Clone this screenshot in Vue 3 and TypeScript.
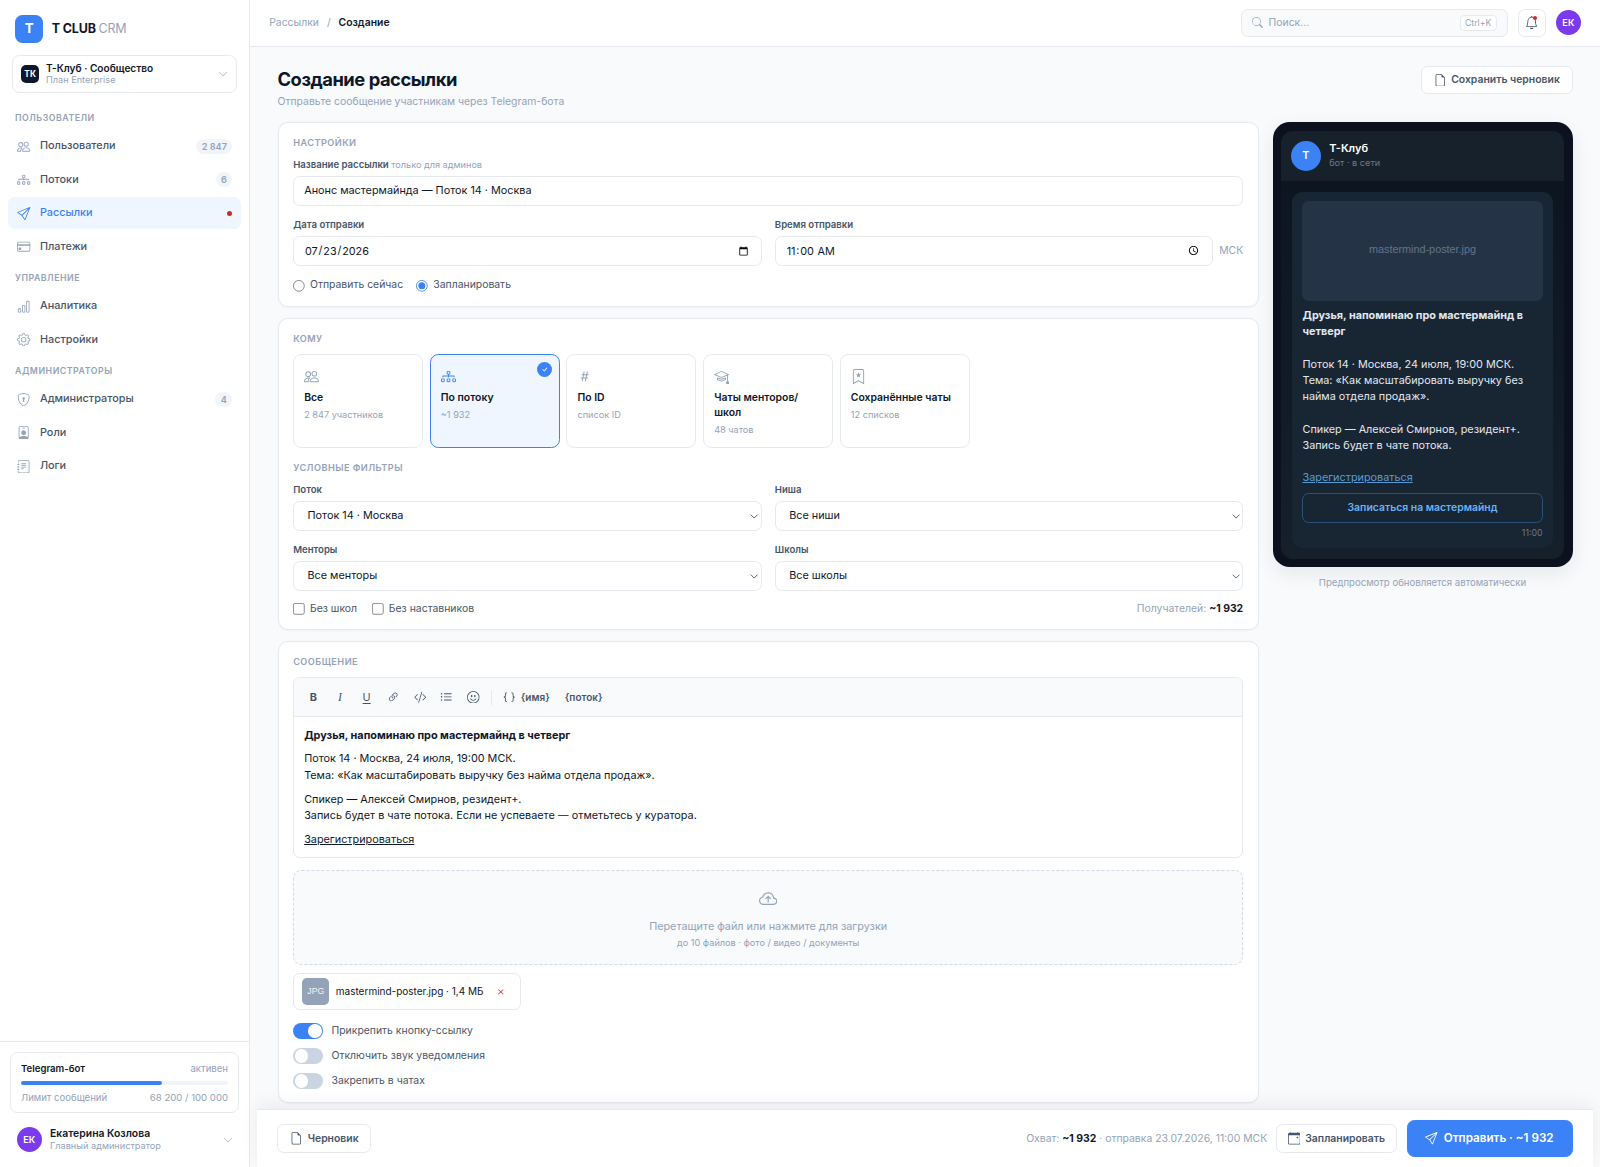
<script setup lang="ts">
import { ref } from 'vue'

type IconName = keyof typeof icons

interface NavItem {
  label: string
  icon: IconName
  badge?: string
  active?: boolean
}

interface NavGroup {
  title: string
  items: NavItem[]
}

interface Target {
  title: string
  note: string
  icon: IconName
  active?: boolean
}

const icons = {
  people: [
    'M15 14s1 0 1-1-1-4-5-4-5 3-5 4 1 1 1 1zm-7.978-1L7 12.996c.001-.264.167-1.03.76-1.72C8.312 10.629 9.282 10 11 10c1.717 0 2.687.63 3.24 1.276.593.69.758 1.457.76 1.72l-.008.002-.014.002zM11 7a2 2 0 1 0 0-4 2 2 0 0 0 0 4m3-2a3 3 0 1 1-6 0 3 3 0 0 1 6 0M6.936 9.28a6 6 0 0 0-1.23-.247A7 7 0 0 0 5 9c-4 0-5 3-5 4q0 1 1 1h4.216A2.24 2.24 0 0 1 5 13c0-1.01.377-2.042 1.09-2.904.243-.294.526-.569.846-.816M4.92 10A5.5 5.5 0 0 0 4 13H1c0-.26.164-1.03.76-1.724.545-.636 1.492-1.256 3.16-1.275ZM1.5 5.5a3 3 0 1 1 6 0 3 3 0 0 1-6 0m3-2a2 2 0 1 0 0 4 2 2 0 0 0 0-4',
  ],
  diagram: [
    'M6 3.5A1.5 1.5 0 0 1 7.5 2h1A1.5 1.5 0 0 1 10 3.5v1A1.5 1.5 0 0 1 8.5 6v1H14a.5.5 0 0 1 .5.5v1a.5.5 0 0 1-1 0V8h-5v.5a.5.5 0 0 1-1 0V8h-5v.5a.5.5 0 0 1-1 0v-1A.5.5 0 0 1 2 7h5.5V6A1.5 1.5 0 0 1 6 4.5zM8.5 5a.5.5 0 0 0 .5-.5v-1a.5.5 0 0 0-.5-.5h-1a.5.5 0 0 0-.5.5v1a.5.5 0 0 0 .5.5zM0 11.5A1.5 1.5 0 0 1 1.5 10h1A1.5 1.5 0 0 1 4 11.5v1A1.5 1.5 0 0 1 2.5 14h-1A1.5 1.5 0 0 1 0 12.5zm1.5-.5a.5.5 0 0 0-.5.5v1a.5.5 0 0 0 .5.5h1a.5.5 0 0 0 .5-.5v-1a.5.5 0 0 0-.5-.5zm4.5.5A1.5 1.5 0 0 1 7.5 10h1a1.5 1.5 0 0 1 1.5 1.5v1A1.5 1.5 0 0 1 8.5 14h-1A1.5 1.5 0 0 1 6 12.5zm1.5-.5a.5.5 0 0 0-.5.5v1a.5.5 0 0 0 .5.5h1a.5.5 0 0 0 .5-.5v-1a.5.5 0 0 0-.5-.5zm4.5.5a1.5 1.5 0 0 1 1.5-1.5h1a1.5 1.5 0 0 1 1.5 1.5v1a1.5 1.5 0 0 1-1.5 1.5h-1a1.5 1.5 0 0 1-1.5-1.5zm1.5-.5a.5.5 0 0 0-.5.5v1a.5.5 0 0 0 .5.5h1a.5.5 0 0 0 .5-.5v-1a.5.5 0 0 0-.5-.5z',
  ],
  send: [
    'M15.854.146a.5.5 0 0 1 .11.54l-5.819 14.547a.75.75 0 0 1-1.329.124l-3.178-4.995L.643 7.184a.75.75 0 0 1 .124-1.33L15.314.037a.5.5 0 0 1 .54.11ZM6.636 10.07l2.761 4.338L14.13 2.576zm6.787-8.201L1.591 6.602l4.339 2.76z',
  ],
  card: [
    'M0 4a2 2 0 0 1 2-2h12a2 2 0 0 1 2 2v8a2 2 0 0 1-2 2H2a2 2 0 0 1-2-2zm2-1a1 1 0 0 0-1 1v1h14V4a1 1 0 0 0-1-1zm13 4H1v5a1 1 0 0 0 1 1h12a1 1 0 0 0 1-1z',
    'M2 10a1 1 0 0 1 1-1h1a1 1 0 0 1 1 1v1a1 1 0 0 1-1 1H3a1 1 0 0 1-1-1z',
  ],
  chart: [
    'M4 11H2v3h2zm5-4H7v7h2zm5-5v12h-2V2zm-2-1a1 1 0 0 0-1 1v12a1 1 0 0 0 1 1h2a1 1 0 0 0 1-1V2a1 1 0 0 0-1-1zM6 7a1 1 0 0 1 1-1h2a1 1 0 0 1 1 1v7a1 1 0 0 1-1 1H7a1 1 0 0 1-1-1zm-5 4a1 1 0 0 1 1-1h2a1 1 0 0 1 1 1v3a1 1 0 0 1-1 1H2a1 1 0 0 1-1-1z',
  ],
  gear: [
    'M8 4.754a3.246 3.246 0 1 0 0 6.492 3.246 3.246 0 0 0 0-6.492M5.754 8a2.246 2.246 0 1 1 4.492 0 2.246 2.246 0 0 1-4.492 0',
    'M9.796 1.343c-.527-1.79-3.065-1.79-3.592 0l-.094.319a.873.873 0 0 1-1.255.52l-.292-.16c-1.64-.892-3.433.902-2.54 2.541l.159.292a.873.873 0 0 1-.52 1.255l-.319.094c-1.79.527-1.79 3.065 0 3.592l.319.094a.873.873 0 0 1 .52 1.255l-.16.292c-.892 1.64.901 3.434 2.541 2.54l.292-.159a.873.873 0 0 1 1.255.52l.094.319c.527 1.79 3.065 1.79 3.592 0l.094-.319a.873.873 0 0 1 1.255-.52l.292.16c1.64.893 3.434-.902 2.54-2.541l-.159-.292a.873.873 0 0 1 .52-1.255l.319-.094c1.79-.527 1.79-3.065 0-3.592l-.319-.094a.873.873 0 0 1-.52-1.255l.16-.292c.893-1.64-.902-3.433-2.541-2.54l-.292.159a.873.873 0 0 1-1.255-.52zm-2.633.283c.246-.835 1.428-.835 1.674 0l.094.319a1.873 1.873 0 0 0 2.693 1.115l.291-.16c.764-.415 1.6.42 1.184 1.185l-.159.292a1.873 1.873 0 0 0 1.116 2.692l.318.094c.835.246.835 1.428 0 1.674l-.319.094a1.873 1.873 0 0 0-1.115 2.693l.16.291c.415.764-.42 1.6-1.185 1.184l-.291-.159a1.873 1.873 0 0 0-2.693 1.116l-.094.318c-.246.835-1.428.835-1.674 0l-.094-.319a1.873 1.873 0 0 0-2.692-1.115l-.292.16c-.764.415-1.6-.42-1.184-1.185l.159-.291A1.873 1.873 0 0 0 1.945 8.93l-.319-.094c-.835-.246-.835-1.428 0-1.674l.319-.094A1.873 1.873 0 0 0 3.06 4.377l-.16-.292c-.415-.764.42-1.6 1.185-1.184l.292.159a1.873 1.873 0 0 0 2.692-1.115z',
  ],
  shield: [
    'M5.338 1.59a61 61 0 0 0-2.837.856.48.48 0 0 0-.328.39c-.554 4.157.726 7.19 2.253 9.188a10.7 10.7 0 0 0 2.287 2.233c.346.244.652.42.893.533q.18.085.293.118a1 1 0 0 0 .101.025 1 1 0 0 0 .1-.025q.114-.034.294-.118c.24-.113.547-.29.893-.533a10.7 10.7 0 0 0 2.287-2.233c1.527-1.997 2.807-5.031 2.253-9.188a.48.48 0 0 0-.328-.39c-.651-.213-1.75-.56-2.837-.855C9.552 1.29 8.531 1.067 8 1.067c-.53 0-1.552.223-2.662.524zM5.072.56C6.157.265 7.31 0 8 0s1.843.265 2.928.56c1.11.3 2.229.655 2.887.87a1.54 1.54 0 0 1 1.044 1.262c.596 4.477-.787 7.795-2.465 9.99a11.8 11.8 0 0 1-2.517 2.453 7 7 0 0 1-1.048.625c-.28.132-.581.24-.829.24s-.548-.108-.829-.24a7 7 0 0 1-1.048-.625 11.8 11.8 0 0 1-2.517-2.453C1.928 10.487.545 7.169 1.141 2.692A1.54 1.54 0 0 1 2.185 1.43 63 63 0 0 1 5.072.56',
    'M9.5 6.5a1.5 1.5 0 0 1-1 1.415l.385 1.99a.5.5 0 0 1-.491.595h-.788a.5.5 0 0 1-.49-.595l.384-1.99a1.5 1.5 0 1 1 2-1.415',
  ],
  badge: [
    'M6.5 2a.5.5 0 0 0 0 1h3a.5.5 0 0 0 0-1zM11 8a3 3 0 1 1-6 0 3 3 0 0 1 6 0',
    'M4.5 0A2.5 2.5 0 0 0 2 2.5V14a2 2 0 0 0 2 2h8a2 2 0 0 0 2-2V2.5A2.5 2.5 0 0 0 11.5 0zM3 2.5A1.5 1.5 0 0 1 4.5 1h7A1.5 1.5 0 0 1 13 2.5v10.795a4.2 4.2 0 0 0-.776-.492C11.392 12.387 10.063 12 8 12s-3.392.387-4.224.803a4.2 4.2 0 0 0-.776.492z',
  ],
  journal: [
    'M5 10.5a.5.5 0 0 1 .5-.5h2a.5.5 0 0 1 0 1h-2a.5.5 0 0 1-.5-.5m0-2a.5.5 0 0 1 .5-.5h5a.5.5 0 0 1 0 1h-5a.5.5 0 0 1-.5-.5m0-2a.5.5 0 0 1 .5-.5h5a.5.5 0 0 1 0 1h-5a.5.5 0 0 1-.5-.5m0-2a.5.5 0 0 1 .5-.5h5a.5.5 0 0 1 0 1h-5a.5.5 0 0 1-.5-.5',
    'M3 0h10a2 2 0 0 1 2 2v12a2 2 0 0 1-2 2H3a2 2 0 0 1-2-2v-1h1v1a1 1 0 0 0 1 1h10a1 1 0 0 0 1-1V2a1 1 0 0 0-1-1H3a1 1 0 0 0-1 1v1H1V2a2 2 0 0 1 2-2',
    'M1 5v-.5a.5.5 0 0 1 1 0V5h.5a.5.5 0 0 1 0 1h-2a.5.5 0 0 1 0-1zm0 3v-.5a.5.5 0 0 1 1 0V8h.5a.5.5 0 0 1 0 1h-2a.5.5 0 0 1 0-1zm0 3v-.5a.5.5 0 0 1 1 0v.5h.5a.5.5 0 0 1 0 1h-2a.5.5 0 0 1 0-1z',
  ],
  file: [
    'M14 4.5V14a2 2 0 0 1-2 2H4a2 2 0 0 1-2-2V2a2 2 0 0 1 2-2h5.5zm-3 0A1.5 1.5 0 0 1 9.5 3V1H4a1 1 0 0 0-1 1v12a1 1 0 0 0 1 1h8a1 1 0 0 0 1-1V4.5z',
  ],
  search: [
    'M11.742 10.344a6.5 6.5 0 1 0-1.397 1.398h-.001q.044.06.098.115l3.85 3.85a1 1 0 0 0 1.415-1.414l-3.85-3.85a1 1 0 0 0-.115-.1zM12 6.5a5.5 5.5 0 1 1-11 0 5.5 5.5 0 0 1 11 0',
  ],
  bell: [
    'M8 16a2 2 0 0 0 2-2H6a2 2 0 0 0 2 2M8 1.918l-.797.161A4 4 0 0 0 4 6c0 .628-.134 2.197-.459 3.742-.16.767-.376 1.566-.663 2.258h10.244c-.287-.692-.502-1.49-.663-2.258C12.134 8.197 12 6.628 12 6a4 4 0 0 0-3.203-3.92zM14.22 12c.223.447.481.801.78 1H1c.299-.199.557-.553.78-1C2.68 10.2 3 6.88 3 6c0-2.42 1.72-4.44 4.005-4.901a1 1 0 1 1 1.99 0A5 5 0 0 1 13 6c0 .88.32 4.2 1.22 6',
  ],
  chevron: [
    'M1.646 4.646a.5.5 0 0 1 .708 0L8 10.293l5.646-5.647a.5.5 0 0 1 .708.708l-6 6a.5.5 0 0 1-.708 0l-6-6a.5.5 0 0 1 0-.708',
  ],
  hash: [
    'M8.39 12.648a1 1 0 0 0-.015.18c0 .305.21.508.5.508.266 0 .492-.172.555-.477l.554-2.703h1.204c.421 0 .617-.234.617-.547 0-.312-.188-.53-.617-.53h-.985l.516-2.524h1.265c.43 0 .618-.227.618-.547 0-.313-.188-.524-.618-.524h-1.046l.476-2.304a1 1 0 0 0 .016-.164.51.51 0 0 0-.516-.516.54.54 0 0 0-.539.43l-.523 2.554H7.617l.477-2.304c.008-.04.015-.118.015-.164a.51.51 0 0 0-.523-.516.54.54 0 0 0-.531.43L6.53 5.484H5.414c-.43 0-.617.22-.617.532s.187.539.617.539h.906l-.515 2.523H4.609c-.421 0-.609.219-.609.531s.188.547.61.547h.976l-.516 2.492c-.008.04-.015.125-.015.18 0 .305.21.508.5.508.265 0 .492-.172.554-.477l.555-2.703h2.242zm-1-6.109h2.266l-.515 2.563H6.859l.532-2.563z',
  ],
  mortarboard: [
    'M8.211 2.047a.5.5 0 0 0-.422 0l-7.5 3.5a.5.5 0 0 0 .025.917l7.5 3a.5.5 0 0 0 .372 0L14 7.14V13a1 1 0 0 0-1 1v2h3v-2a1 1 0 0 0-1-1V6.739l.686-.275a.5.5 0 0 0 .025-.917zM8 8.46 1.758 5.965 8 3.052l6.242 2.913z',
    'M4.176 9.032a.5.5 0 0 0-.656.327l-.5 1.7a.5.5 0 0 0 .294.605l4.5 1.8a.5.5 0 0 0 .372 0l4.5-1.8a.5.5 0 0 0 .294-.605l-.5-1.7a.5.5 0 0 0-.656-.327L8 10.466zm-.068 1.873.22-.748 3.496 1.311a.5.5 0 0 0 .352 0l3.496-1.311.22.748L8 12.46z',
  ],
  bookmark: [
    'M7.84 4.1a.178.178 0 0 1 .32 0l.634 1.285a.18.18 0 0 0 .134.098l1.42.206c.145.021.204.2.098.303L9.42 6.993a.18.18 0 0 0-.051.158l.242 1.414a.178.178 0 0 1-.258.187l-1.27-.668a.18.18 0 0 0-.165 0l-1.27.668a.178.178 0 0 1-.257-.187l.242-1.414a.18.18 0 0 0-.05-.158l-1.03-1.001a.178.178 0 0 1 .098-.303l1.42-.206a.18.18 0 0 0 .134-.098z',
    'M2 2a2 2 0 0 1 2-2h8a2 2 0 0 1 2 2v13.5a.5.5 0 0 1-.777.416L8 13.101l-5.223 2.815A.5.5 0 0 1 2 15.5zm2-1a1 1 0 0 0-1 1v12.566l4.723-2.482a.5.5 0 0 1 .554 0L13 14.566V2a1 1 0 0 0-1-1z',
  ],
  link: [
    'M4.715 6.542 3.343 7.914a3 3 0 1 0 4.243 4.243l1.828-1.829A3 3 0 0 0 8.586 5.5L8 6.086a1 1 0 0 0-.154.199 2 2 0 0 1 .861 3.337L6.88 11.45a2 2 0 1 1-2.83-2.83l.793-.792a4 4 0 0 1-.128-1.287z',
    'M6.586 4.672A3 3 0 0 0 7.414 9.5l.775-.776a2 2 0 0 1-.896-3.346L9.12 3.55a2 2 0 1 1 2.83 2.83l-.793.792c.112.42.155.855.128 1.287l1.372-1.372a3 3 0 1 0-4.243-4.243z',
  ],
  code: [
    'M10.478 1.647a.5.5 0 1 0-.956-.294l-4 13a.5.5 0 0 0 .956.294zM4.854 4.146a.5.5 0 0 1 0 .708L1.707 8l3.147 3.146a.5.5 0 0 1-.708.708l-3.5-3.5a.5.5 0 0 1 0-.708l3.5-3.5a.5.5 0 0 1 .708 0m6.292 0a.5.5 0 0 0 0 .708L14.293 8l-3.147 3.146a.5.5 0 0 0 .708.708l3.5-3.5a.5.5 0 0 0 0-.708l-3.5-3.5a.5.5 0 0 0-.708 0',
  ],
  list: [
    'M5 11.5a.5.5 0 0 1 .5-.5h9a.5.5 0 0 1 0 1h-9a.5.5 0 0 1-.5-.5m0-4a.5.5 0 0 1 .5-.5h9a.5.5 0 0 1 0 1h-9a.5.5 0 0 1-.5-.5m0-4a.5.5 0 0 1 .5-.5h9a.5.5 0 0 1 0 1h-9a.5.5 0 0 1-.5-.5m-3 1a1 1 0 1 0 0-2 1 1 0 0 0 0 2m0 4a1 1 0 1 0 0-2 1 1 0 0 0 0 2m0 4a1 1 0 1 0 0-2 1 1 0 0 0 0 2',
  ],
  smile: [
    'M8 15A7 7 0 1 1 8 1a7 7 0 0 1 0 14m0 1A8 8 0 1 0 8 0a8 8 0 0 0 0 16',
    'M4.285 9.567a.5.5 0 0 1 .683.183A3.5 3.5 0 0 0 8 11.5a3.5 3.5 0 0 0 3.032-1.75.5.5 0 1 1 .866.5A4.5 4.5 0 0 1 8 12.5a4.5 4.5 0 0 1-3.898-2.25.5.5 0 0 1 .183-.683M7 6.5C7 7.328 6.552 8 6 8s-1-.672-1-1.5S5.448 5 6 5s1 .672 1 1.5m4 0c0 .828-.448 1.5-1 1.5s-1-.672-1-1.5S9.448 5 10 5s1 .672 1 1.5',
  ],
  braces: [
    'M2.114 8.063V7.9c1.005-.102 1.497-.615 1.497-1.6V4.503c0-1.094.39-1.538 1.354-1.538h.273V2h-.376C3.25 2 2.49 2.759 2.49 4.352v1.524c0 1.094-.376 1.456-1.49 1.456v1.299c1.114 0 1.49.362 1.49 1.456v1.524c0 1.593.759 2.352 2.372 2.352h.376v-.964h-.273c-.964 0-1.354-.444-1.354-1.538V9.663c0-.984-.492-1.497-1.497-1.6M13.886 7.9v.163c-1.005.103-1.497.616-1.497 1.6v1.798c0 1.094-.39 1.538-1.354 1.538h-.273v.964h.376c1.613 0 2.372-.759 2.372-2.352v-1.524c0-1.094.376-1.456 1.49-1.456V7.332c-1.114 0-1.49-.362-1.49-1.456V4.352C13.51 2.759 12.75 2 11.138 2h-.376v.964h.273c.964 0 1.354.444 1.354 1.538V6.3c0 .984.492 1.497 1.497 1.6',
  ],
  cloud: [
    'M7.646 5.146a.5.5 0 0 1 .708 0l2 2a.5.5 0 0 1-.708.708L8.5 6.707V10.5a.5.5 0 0 1-1 0V6.707L6.354 7.854a.5.5 0 1 1-.708-.708z',
    'M4.406 3.342A5.53 5.53 0 0 1 8 2c2.69 0 4.923 2 5.166 4.579C14.758 6.804 16 8.137 16 9.773 16 11.569 14.502 13 12.687 13H3.781C1.708 13 0 11.366 0 9.318c0-1.763 1.266-3.223 2.942-3.593.143-.863.698-1.723 1.464-2.383m.653.757c-.757.653-1.153 1.44-1.153 2.056v.448l-.445.049C2.064 6.805 1 7.952 1 9.318 1 10.785 2.23 12 3.781 12h8.906C13.98 12 15 10.988 15 9.773c0-1.216-1.02-2.228-2.313-2.228h-.5v-.5C12.188 4.825 10.328 3 8 3a4.53 4.53 0 0 0-2.941 1.1z',
  ],
  close: [
    'M4.646 4.646a.5.5 0 0 1 .708 0L8 7.293l2.646-2.647a.5.5 0 0 1 .708.708L8.707 8l2.647 2.646a.5.5 0 0 1-.708.708L8 8.707l-2.646 2.647a.5.5 0 0 1-.708-.708L7.293 8 4.646 5.354a.5.5 0 0 1 0-.708',
  ],
  check: [
    'M10.97 4.97a.75.75 0 0 1 1.07 1.05l-3.99 4.99a.75.75 0 0 1-1.08.02L4.324 8.384a.75.75 0 1 1 1.06-1.06l2.094 2.093 3.473-4.425z',
  ],
  calendar: [
    'M11 6.5a.5.5 0 0 1 .5-.5h1a.5.5 0 0 1 .5.5v1a.5.5 0 0 1-.5.5h-1a.5.5 0 0 1-.5-.5z',
    'M3.5 0a.5.5 0 0 1 .5.5V1h8V.5a.5.5 0 0 1 1 0V1h1a2 2 0 0 1 2 2v11a2 2 0 0 1-2 2H2a2 2 0 0 1-2-2V3a2 2 0 0 1 2-2h1V.5a.5.5 0 0 1 .5-.5M1 4v10a1 1 0 0 0 1 1h12a1 1 0 0 0 1-1V4z',
  ],
}

const navGroups: NavGroup[] = [
  {
    title: 'Пользователи',
    items: [
      { label: 'Пользователи', icon: 'people', badge: '2 847' },
      { label: 'Потоки', icon: 'diagram', badge: '6' },
      { label: 'Рассылки', icon: 'send', active: true },
      { label: 'Платежи', icon: 'card' },
    ],
  },
  {
    title: 'Управление',
    items: [
      { label: 'Аналитика', icon: 'chart' },
      { label: 'Настройки', icon: 'gear' },
    ],
  },
  {
    title: 'Администраторы',
    items: [
      { label: 'Администраторы', icon: 'shield', badge: '4' },
      { label: 'Роли', icon: 'badge' },
      { label: 'Логи', icon: 'journal' },
    ],
  },
]

const targets: Target[] = [
  { title: 'Все', note: '2 847 участников', icon: 'people' },
  { title: 'По потоку', note: '~1 932', icon: 'diagram', active: true },
  { title: 'По ID', note: 'список ID', icon: 'hash' },
  { title: 'Чаты менторов/школ', note: '48 чатов', icon: 'mortarboard' },
  { title: 'Сохранённые чаты', note: '12 списков', icon: 'bookmark' },
]

const filters = [
  { label: 'Поток', value: 'Поток 14 · Москва' },
  { label: 'Ниша', value: 'Все ниши' },
  { label: 'Менторы', value: 'Все менторы' },
  { label: 'Школы', value: 'Все школы' },
]

const toolIcons: IconName[] = ['link', 'code', 'list', 'smile']

const toggles = ref([
  { label: 'Прикрепить кнопку-ссылку', on: true },
  { label: 'Отключить звук уведомления', on: false },
  { label: 'Закрепить в чатах', on: false },
])

const name = ref('Анонс мастермайнда — Поток 14 · Москва')
const date = ref('2026-07-23')
const time = ref('11:00')
const mode = ref('plan')
const quotaUsed = 68
</script>

<template>
  <div class="app">
    <aside class="sidebar">
      <div class="brand">
        <div class="brand-mark">T</div>
        <div class="brand-name">T CLUB <span>CRM</span></div>
      </div>
      <div class="workspace">
        <div class="ws-mark">ТК</div>
        <div class="ws-text">
          <b>Т-Клуб · Сообщество</b>
          <small>План Enterprise</small>
        </div>
        <svg class="chev" viewBox="0 0 16 16"><path v-for="d in icons.chevron" :key="d" :d="d" /></svg>
      </div>
      <nav>
        <template v-for="g in navGroups" :key="g.title">
          <div class="nav-title">{{ g.title }}</div>
          <a v-for="i in g.items" :key="i.label" class="nav-item" :class="{ active: i.active }">
            <svg viewBox="0 0 16 16"><path v-for="d in icons[i.icon]" :key="d" :d="d" /></svg>
            <span class="nav-label">{{ i.label }}</span>
            <span v-if="i.badge" class="nav-badge">{{ i.badge }}</span>
            <span v-if="i.active" class="nav-dot"></span>
          </a>
        </template>
      </nav>
      <div class="side-bottom">
        <div class="quota">
          <div class="row"><b>Telegram-бот</b><span>активен</span></div>
          <div class="track"><div class="fill" :style="{ width: quotaUsed + '%' }"></div></div>
          <div class="row"><span>Лимит сообщений</span><span>68 200 / 100 000</span></div>
        </div>
        <div class="user">
          <div class="avatar">ЕК</div>
          <div class="user-text">
            <b>Екатерина Козлова</b>
            <small>Главный администратор</small>
          </div>
          <svg class="chev" viewBox="0 0 16 16"><path v-for="d in icons.chevron" :key="d" :d="d" /></svg>
        </div>
      </div>
    </aside>

    <div class="page">
      <header class="topbar">
        <div class="crumbs"><span>Рассылки</span><i>/</i><b>Создание</b></div>
        <div class="search">
          <svg viewBox="0 0 16 16"><path v-for="d in icons.search" :key="d" :d="d" /></svg>
          <span>Поиск...</span>
          <kbd>Ctrl+K</kbd>
        </div>
        <button class="bell">
          <svg viewBox="0 0 16 16"><path v-for="d in icons.bell" :key="d" :d="d" /></svg>
          <span class="bell-dot"></span>
        </button>
        <div class="avatar">ЕК</div>
      </header>

      <main class="content">
        <div class="head">
          <div>
            <h1>Создание рассылки</h1>
            <p>Отправьте сообщение участникам через Telegram-бота</p>
          </div>
          <button class="btn">
            <svg viewBox="0 0 16 16"><path v-for="d in icons.file" :key="d" :d="d" /></svg>Сохранить черновик
          </button>
        </div>

        <div class="columns">
          <div class="left">
            <section class="card settings">
              <h2>Настройки</h2>
              <label class="field">
                <span class="lbl">Название рассылки <em>только для админов</em></span>
                <input v-model="name" type="text" />
              </label>
              <div class="two">
                <label class="field">
                  <span class="lbl">Дата отправки</span>
                  <input v-model="date" type="date" />
                </label>
                <label class="field">
                  <span class="lbl">Время отправки</span>
                  <span class="time"><input v-model="time" type="time" /><span>МСК</span></span>
                </label>
              </div>
              <div class="options">
                <label><input v-model="mode" type="radio" name="mode" value="now" />Отправить сейчас</label>
                <label><input v-model="mode" type="radio" name="mode" value="plan" />Запланировать</label>
              </div>
            </section>

            <section class="card audience">
              <h2>Кому</h2>
              <div class="targets">
                <div v-for="t in targets" :key="t.title" class="target" :class="{ active: t.active }">
                  <svg class="t-icon" viewBox="0 0 16 16"><path v-for="d in icons[t.icon]" :key="d" :d="d" /></svg>
                  <b>{{ t.title }}</b>
                  <small>{{ t.note }}</small>
                  <span v-if="t.active" class="tick">
                    <svg viewBox="0 0 16 16"><path v-for="d in icons.check" :key="d" :d="d" /></svg>
                  </span>
                </div>
              </div>
              <h2 class="sub">Условные фильтры</h2>
              <div class="two filters">
                <label v-for="f in filters" :key="f.label" class="field">
                  <span class="lbl">{{ f.label }}</span>
                  <span class="select">
                    <select><option>{{ f.value }}</option></select>
                    <svg viewBox="0 0 10 6"><path d="M1 .8 5 4.9 9 .8" /></svg>
                  </span>
                </label>
              </div>
              <div class="options checks">
                <label><input type="checkbox" />Без школ</label>
                <label><input type="checkbox" />Без наставников</label>
                <span class="total">Получателей: <b>~1 932</b></span>
              </div>
            </section>

            <section class="card message">
              <h2>Сообщение</h2>
              <div class="editor">
                <div class="toolbar">
                  <button class="tool bold">B</button>
                  <button class="tool italic">I</button>
                  <button class="tool under">U</button>
                  <button v-for="t in toolIcons" :key="t" class="tool">
                    <svg viewBox="0 0 16 16"><path v-for="d in icons[t]" :key="d" :d="d" /></svg>
                  </button>
                  <span class="sep"></span>
                  <button class="var">
                    <svg viewBox="0 0 16 16"><path v-for="d in icons.braces" :key="d" :d="d" /></svg>{имя}
                  </button>
                  <button class="var">{поток}</button>
                </div>
                <div class="body">
                  <p><b>Друзья, напоминаю про мастермайнд в четверг</b></p>
                  <p>Поток 14 · Москва, 24 июля, 19:00 МСК.<br />Тема: «Как масштабировать выручку без найма отдела продаж».</p>
                  <p>Спикер — Алексей Смирнов, резидент+.<br />Запись будет в чате потока. Если не успеваете — отметьтесь у куратора.</p>
                  <p><u>Зарегистрироваться</u></p>
                </div>
              </div>
              <div class="drop">
                <svg viewBox="0 0 16 16"><path v-for="d in icons.cloud" :key="d" :d="d" /></svg>
                <div>Перетащите файл или нажмите для загрузки</div>
                <small>до 10 файлов · фото / видео / документы</small>
              </div>
              <div class="chip">
                <span class="thumb">JPG</span>
                <span>mastermind-poster.jpg · 1,4 МБ</span>
                <button><svg viewBox="0 0 16 16"><path v-for="d in icons.close" :key="d" :d="d" /></svg></button>
              </div>
              <div class="toggles">
                <label v-for="t in toggles" :key="t.label" @click="t.on = !t.on">
                  <span class="switch" :class="{ on: t.on }"></span>{{ t.label }}
                </label>
              </div>
            </section>
          </div>

          <div class="right">
            <div class="phone">
              <div class="screen">
                <div class="tg-head">
                  <div class="tg-ava">T</div>
                  <div>
                    <b>Т-Клуб</b>
                    <small>бот · в сети</small>
                  </div>
                </div>
                <div class="chat">
                  <div class="bubble">
                    <div class="poster">mastermind-poster.jpg</div>
                    <div class="msg">
                      <b>Друзья, напоминаю про мастермайнд в четверг</b><br /><br />Поток 14 · Москва, 24 июля, 19:00 МСК.<br />Тема: «Как масштабировать выручку без найма отдела продаж».<br /><br />Спикер — Алексей Смирнов, резидент+.<br />Запись будет в чате потока.<br /><br /><u>Зарегистрироваться</u>
                    </div>
                    <div class="tg-btn">Записаться на мастермайнд</div>
                    <div class="stamp">11:00</div>
                  </div>
                </div>
              </div>
            </div>
            <div class="caption">Предпросмотр обновляется автоматически</div>
          </div>
        </div>
      </main>

      <footer class="actions">
        <button class="btn">
          <svg viewBox="0 0 16 16"><path v-for="d in icons.file" :key="d" :d="d" /></svg>Черновик
        </button>
        <span class="reach">Охват: <b>~1 932</b> · отправка 23.07.2026, 11:00 МСК</span>
        <button class="btn plan">
          <svg viewBox="0 0 16 16"><path v-for="d in icons.calendar" :key="d" :d="d" /></svg>Запланировать
        </button>
        <button class="btn primary">
          <svg viewBox="0 0 16 16"><path v-for="d in icons.send" :key="d" :d="d" /></svg>Отправить · ~1 932
        </button>
      </footer>
    </div>
  </div>
</template>

<style>
html,
body {
  margin: 0;
  overflow: hidden;
  background: #fff;
}
</style>

<style scoped>
.app {
  --line: #e6eaf0;
  zoom: 0.8333333;
  display: flex;
  width: 1920px;
  height: 1400.4px;
  overflow: hidden;
  background: #f9fafc;
  color: #0f172a;
  font-family: Inter, 'Liberation Sans', sans-serif;
  font-size: 14px;
  line-height: 1.5;
}
.app *,
.app *::before {
  box-sizing: border-box;
}
svg {
  fill: currentColor;
  flex: none;
  display: block;
}
button,
input,
select {
  font-family: inherit;
  color: inherit;
  margin: 0;
}
small {
  display: block;
}

/* Sidebar */
.sidebar {
  width: 300px;
  flex: none;
  display: flex;
  flex-direction: column;
  background: #fff;
  border-right: 1px solid var(--line);
}
.brand {
  display: flex;
  align-items: center;
  gap: 10px;
  padding: 18px 18px 14px;
}
.brand-mark {
  width: 34px;
  height: 34px;
  border-radius: 9px;
  background: #3b82f6;
  color: #fff;
  font-weight: 700;
  font-size: 16px;
  display: flex;
  align-items: center;
  justify-content: center;
}
.brand-name {
  font-weight: 700;
  font-size: 15px;
  letter-spacing: -0.01em;
}
.brand-name span {
  margin-left: -0.5px;
  font-weight: 400;
  color: #94a3b8;
}
.workspace {
  margin: 0 14px;
  height: 46px;
  display: flex;
  align-items: center;
  gap: 8px;
  padding: 0 10px;
  border: 1px solid var(--line);
  border-radius: 9px;
}
.ws-mark {
  width: 22px;
  height: 22px;
  border-radius: 6px;
  background: #0f172a;
  color: #fff;
  font-size: 10px;
  font-weight: 700;
  display: flex;
  align-items: center;
  justify-content: center;
}
.ws-text {
  flex: 1;
  font-size: 12.1px;
  line-height: 14px;
}
.ws-text b,
.user-text b {
  display: block;
  font-weight: 600;
}
.ws-text small {
  font-size: 11px;
  line-height: 13px;
  color: #94a3b8;
}
.chev {
  width: 12px;
  height: 12px;
  color: #94a3b8;
}
nav {
  flex: 1;
  padding: 13.4px 10px 0;
}
.nav-title {
  padding: 10px 8px 8px;
  font-size: 10.5px;
  line-height: 13px;
  font-weight: 600;
  letter-spacing: 0.06em;
  text-transform: uppercase;
  color: #94a3b8;
}
.nav-item {
  height: 38.3px;
  margin-bottom: 2px;
  padding: 0 10px 0 11px;
  display: flex;
  align-items: center;
  gap: 11px;
  border-radius: 8px;
  font-size: 13px;
  font-weight: 500;
  color: #475569;
}
.nav-item svg {
  width: 16px;
  height: 16px;
  color: #94a3b8;
}
.nav-label {
  flex: 1;
}
.nav-item.active {
  background: #eff6ff;
  color: #3b82f6;
}
.nav-item.active svg {
  color: #3b82f6;
}
.nav-badge {
  padding: 0 6.5px;
  border-radius: 10px;
  background: #f1f5f9;
  color: #94a3b8;
  font-size: 11px;
  font-weight: 600;
  line-height: 18px;
}
.nav-dot {
  width: 6px;
  height: 6px;
  border-radius: 50%;
  background: #dc2626;
}
.side-bottom {
  border-top: 1px solid var(--line);
  padding: 12px;
  height: 151.6px;
}
.quota {
  height: 74px;
  border: 1px solid var(--line);
  border-radius: 9px;
  padding: 9.5px 12px;
  font-size: 11.5px;
  line-height: 18px;
}
.quota .row {
  display: flex;
  justify-content: space-between;
  color: #94a3b8;
}
.quota b {
  font-weight: 600;
  color: #0f172a;
}
.track {
  height: 5px;
  margin: 6px 0;
  border-radius: 3px;
  background: #f1f5f9;
}
.fill {
  height: 5px;
  border-radius: 3px;
  background: #3b82f6;
}
.user {
  margin-top: 16.5px;
  padding: 0 7px 0 8px;
  display: flex;
  align-items: center;
  gap: 10px;
}
.avatar {
  width: 30px;
  height: 30px;
  flex: none;
  border-radius: 50%;
  background: #7c3aed;
  color: #fff;
  font-size: 11px;
  font-weight: 600;
  display: flex;
  align-items: center;
  justify-content: center;
}
.user-text {
  flex: 1;
  font-size: 12.5px;
  line-height: 16px;
}
.user-text small {
  font-size: 11px;
  line-height: 14px;
  color: #94a3b8;
}

/* Top bar */
.page {
  flex: 1;
  display: flex;
  flex-direction: column;
  min-width: 0;
}
.topbar {
  height: 56px;
  flex: none;
  display: flex;
  align-items: center;
  gap: 12px;
  padding: 0 23px;
  background: #fff;
  border-bottom: 1px solid var(--line);
}
.crumbs {
  flex: 1;
  display: flex;
  gap: 9.5px;
  font-size: 12.5px;
  color: #94a3b8;
}
.crumbs i {
  font-style: normal;
}
.crumbs b {
  font-weight: 600;
  color: #0f172a;
}
.search {
  width: 320px;
  height: 34px;
  display: flex;
  align-items: center;
  gap: 7px;
  padding: 0 12px;
  border: 1px solid var(--line);
  border-radius: 8px;
  background: #f8fafc;
  font-size: 12.5px;
  color: #94a3b8;
}
.search svg {
  width: 13px;
  height: 13px;
}
.search span {
  flex: 1;
}
kbd {
  padding: 0 5px;
  border: 1px solid var(--line);
  border-radius: 5px;
  background: #fff;
  font-family: inherit;
  font-size: 10.5px;
  line-height: 17px;
}
.bell {
  position: relative;
  width: 34px;
  height: 34px;
  padding: 0;
  display: flex;
  align-items: center;
  justify-content: center;
  border: 1px solid var(--line);
  border-radius: 8px;
  background: #fff;
  color: #475569;
}
.bell svg {
  width: 16px;
  height: 16px;
}
.bell-dot {
  position: absolute;
  top: 8px;
  right: 9px;
  width: 5px;
  height: 5px;
  border-radius: 50%;
  background: #dc2626;
}

/* Heading */
.content {
  flex: 1;
  min-height: 0;
  padding: 0 33px;
}
.head {
  height: 91px;
  padding-top: 23px;
  display: flex;
  justify-content: space-between;
  align-items: flex-start;
}
h1 {
  margin: 0;
  font-size: 22px;
  line-height: 32px;
  font-weight: 700;
  letter-spacing: -0.025em;
}
.head p {
  margin: 2px 0 0;
  font-size: 12.5px;
  line-height: 18px;
  color: #94a3b8;
}
.btn {
  height: 34px;
  display: inline-flex;
  align-items: center;
  gap: 6px;
  padding: 0 14px;
  border: 1px solid var(--line);
  border-radius: 8px;
  background: #fff;
  color: #475569;
  font-size: 12.5px;
  font-weight: 600;
  white-space: nowrap;
}
.btn svg {
  width: 15px;
  height: 15px;
}

/* Form cards */
.columns {
  display: flex;
  gap: 16px;
  align-items: flex-start;
}
.left {
  flex: 1;
  display: flex;
  flex-direction: column;
  gap: 14px;
}
.card {
  padding: 15px 18px 15px 17.6px;
  border: 1px solid var(--line);
  border-radius: 12px;
  background: #fff;
  box-shadow: 0 1px 2px rgba(15, 23, 42, 0.04);
}
.settings {
  height: 221.2px;
}
.audience {
  height: 373.4px;
}
.message {
  height: 554.4px;
}
h2 {
  margin: 0 0 11px;
  font-size: 11px;
  line-height: 16px;
  font-weight: 600;
  letter-spacing: 0.05em;
  text-transform: uppercase;
  color: #94a3b8;
}
.settings h2 {
  margin-bottom: 12px;
}
.field {
  display: block;
}
.lbl {
  display: block;
  margin-bottom: 5px;
  font-size: 11.5px;
  line-height: 15px;
  font-weight: 600;
  color: #475569;
}
.lbl em {
  font-style: normal;
  font-weight: 400;
  font-size: 11px;
  color: #94a3b8;
}
.field input,
.field select {
  display: block;
  width: 100%;
  height: 36px;
  padding: 0 12px;
  border: 1px solid var(--line);
  border-radius: 8px;
  background: #fff;
  color: #0f172a;
  font-size: 13px;
}
.select {
  position: relative;
  display: block;
}
.field select {
  appearance: none;
  padding: 0 16px;
}
.select svg {
  position: absolute;
  right: 3.5px;
  top: 15.5px;
  width: 10px;
  height: 6px;
  fill: none;
  stroke: #475569;
  stroke-width: 1.1;
}
.two {
  display: grid;
  grid-template-columns: 1fr 1fr;
  gap: 16px;
}
.settings .two {
  margin-top: 16px;
}
.time {
  display: flex;
  align-items: center;
  gap: 8px;
  font-size: 12.5px;
  color: #94a3b8;
}
.options {
  margin-top: 13.8px;
  display: flex;
  align-items: center;
  gap: 16px;
  font-size: 12.5px;
  line-height: 20px;
  color: #475569;
}
.options label {
  display: flex;
  align-items: center;
  gap: 6.2px;
}
.options input {
  width: 14px;
  height: 14px;
  accent-color: #3b82f6;
}
.targets {
  display: flex;
  gap: 8px;
}
.target {
  position: relative;
  width: 156px;
  height: 112px;
  padding: 12px;
  border: 1px solid var(--line);
  border-radius: 10px;
}
.target.active {
  border-color: #3b82f6;
  background: #eff6ff;
}
.t-icon {
  width: 18px;
  height: 18px;
  margin: 4px 0 7.5px;
  color: #94a3b8;
}
.active .t-icon {
  color: #3b82f6;
}
.target b {
  display: block;
  font-size: 12.5px;
  line-height: 18px;
  font-weight: 600;
}
.target small {
  margin-top: 4.5px;
  font-size: 11px;
  line-height: 15px;
  color: #94a3b8;
}
.tick {
  position: absolute;
  top: 8px;
  right: 8px;
  width: 18px;
  height: 18px;
  border-radius: 50%;
  background: #3b82f6;
  color: #fff;
  display: flex;
  align-items: center;
  justify-content: center;
}
.tick svg {
  width: 11px;
  height: 11px;
}
h2.sub {
  margin-top: 16px;
}
.filters {
  margin-top: 11.6px;
  row-gap: 16px;
}
.checks {
  margin-top: 12px;
  gap: 18px;
}
.total {
  margin-left: auto;
  color: #94a3b8;
}
.total b,
.reach b {
  font-weight: 700;
  color: #0f172a;
}

/* Message editor */
.editor {
  border: 1px solid var(--line);
  border-radius: 8px;
  overflow: hidden;
}
.toolbar {
  height: 46.6px;
  padding: 7.6px 8px;
  display: flex;
  align-items: center;
  gap: 2px;
  background: #f9fafc;
  border-bottom: 1px solid var(--line);
}
.tool,
.var {
  height: 30px;
  padding: 0;
  border: 0;
  background: none;
  color: #475569;
  display: flex;
  align-items: center;
  justify-content: center;
}
.tool {
  width: 30px;
  font-size: 13px;
}
.tool svg,
.var svg {
  width: 15px;
  height: 15px;
}
.bold {
  font-weight: 700;
}
.italic {
  font-family: 'Liberation Serif', serif;
  font-style: italic;
  font-size: 14px;
}
.under {
  text-decoration: underline;
  text-underline-offset: 2px;
}
.var {
  padding: 0 8px;
  gap: 6px;
  font-size: 12px;
  font-weight: 600;
}
.sep {
  width: 1px;
  height: 18px;
  margin: 0 4px;
  background: var(--line);
}
.body {
  padding: 13px 12px 10.4px;
  font-size: 13px;
  line-height: 20.15px;
}
.body p {
  margin: 0 0 8px;
}
.body p:last-child {
  margin: 0;
}
.body b {
  font-weight: 700;
}
.drop {
  margin-top: 14.4px;
  height: 114px;
  padding-top: 22.5px;
  border: 1px dashed #d5dbe5;
  border-radius: 10px;
  background: #f9fafc;
  display: flex;
  flex-direction: column;
  align-items: center;
  font-size: 13px;
  line-height: 20px;
  color: #94a3b8;
}
.drop svg {
  width: 22px;
  height: 22px;
  margin-bottom: 12.5px;
}
.drop small {
  margin-top: 0.5px;
  font-size: 11px;
  line-height: 16px;
}
.chip {
  width: max-content;
  height: 45px;
  margin-top: 9px;
  padding: 0 10px;
  display: flex;
  align-items: center;
  gap: 8px;
  border: 1px solid var(--line);
  border-radius: 8px;
  font-size: 12px;
}
.thumb {
  width: 32px;
  height: 32px;
  border-radius: 6px;
  background: #94a3b8;
  color: #f1f5f9;
  font-family: 'Liberation Sans', sans-serif;
  font-size: 10.5px;
  display: flex;
  align-items: center;
  justify-content: center;
}
.chip button {
  width: 26px;
  height: 26px;
  padding: 0;
  border: 0;
  background: none;
  color: #dc2626;
  display: flex;
  align-items: center;
  justify-content: center;
}
.chip button svg {
  width: 14px;
  height: 14px;
}
.toggles {
  margin-top: 15px;
  display: flex;
  flex-direction: column;
  gap: 10px;
}
.toggles label {
  height: 20px;
  display: flex;
  align-items: center;
  gap: 10px;
  font-size: 12.5px;
  color: #475569;
}
.switch {
  width: 36px;
  height: 20px;
  padding: 2px;
  border-radius: 10px;
  background: #cbd5e1;
  display: flex;
}
.switch::before {
  content: '';
  width: 16px;
  height: 16px;
  border-radius: 50%;
  background: #fff;
}
.switch.on {
  background: #3b82f6;
  justify-content: flex-end;
}

/* Telegram preview */
.right {
  width: 360px;
  flex: none;
}
.phone {
  height: 533.4px;
  padding: 10px;
  border-radius: 20px;
  background: #0b111e;
  box-shadow: 0 8px 24px rgba(15, 23, 42, 0.08);
}
.screen {
  height: 100%;
  display: flex;
  flex-direction: column;
  border-radius: 14px;
  overflow: hidden;
}
.tg-head {
  height: 60px;
  flex: none;
  padding: 12px;
  display: flex;
  align-items: center;
  gap: 10px;
  background: #17212b;
  color: #fff;
}
.tg-head b {
  display: block;
  font-size: 13.2px;
  font-weight: 600;
  line-height: 18px;
}
.tg-head small {
  font-size: 11px;
  line-height: 17px;
  color: #6c7a89;
}
.tg-ava {
  width: 36px;
  height: 36px;
  border-radius: 50%;
  background: #3b82f6;
  font-size: 13px;
  font-weight: 600;
  display: flex;
  align-items: center;
  justify-content: center;
}
.chat {
  flex: 1;
  padding: 14px;
  background: linear-gradient(180deg, #0c1520, #15202a);
}
.bubble {
  padding: 10px 12px;
  border-radius: 12px;
  background: #182533;
  color: #e2e8f0;
}
.poster {
  height: 120px;
  padding-bottom: 4px;
  border-radius: 8px;
  background: #253347;
  color: #64748b;
  font-family: 'Liberation Sans', sans-serif;
  font-size: 13px;
  display: flex;
  align-items: center;
  justify-content: center;
}
.msg {
  margin-top: 8.4px;
  font-size: 13px;
  line-height: 19.5px;
}
.msg b {
  font-weight: 700;
}
.msg u {
  color: #5b9bd5;
}
.tg-btn {
  height: 36px;
  margin-top: 7.9px;
  display: flex;
  align-items: center;
  justify-content: center;
  border: 1px solid #2b5278;
  border-radius: 8px;
  color: #6ab3f3;
  font-size: 12.5px;
  font-weight: 600;
}
.stamp {
  margin-top: 4.5px;
  text-align: right;
  font-size: 10.5px;
  line-height: 15px;
  color: #6c7a89;
}
.caption {
  margin-top: 10px;
  text-align: center;
  font-size: 11.5px;
  line-height: 18px;
  color: #94a3b8;
}

/* Sticky actions */
.actions {
  position: relative;
  height: 69.8px;
  flex: none;
  margin: 0 9px 0 8px;
  padding: 0 24px 0 25px;
  display: flex;
  align-items: center;
  gap: 11px;
  background: #fff;
  border-top: 1px solid var(--line);
  box-shadow: 0 -6px 20px rgba(15, 23, 42, 0.06);
}
.reach {
  margin: 0 -1px 0 auto;
  font-size: 12.5px;
  color: #94a3b8;
}
.btn.plan {
  padding: 0 13.5px;
}
.btn.primary {
  height: 44px;
  padding: 0 21.5px;
  gap: 7px;
  border-color: #3b82f6;
  border-radius: 9px;
  background: #3b82f6;
  color: #fff;
  font-size: 14px;
}
</style>
